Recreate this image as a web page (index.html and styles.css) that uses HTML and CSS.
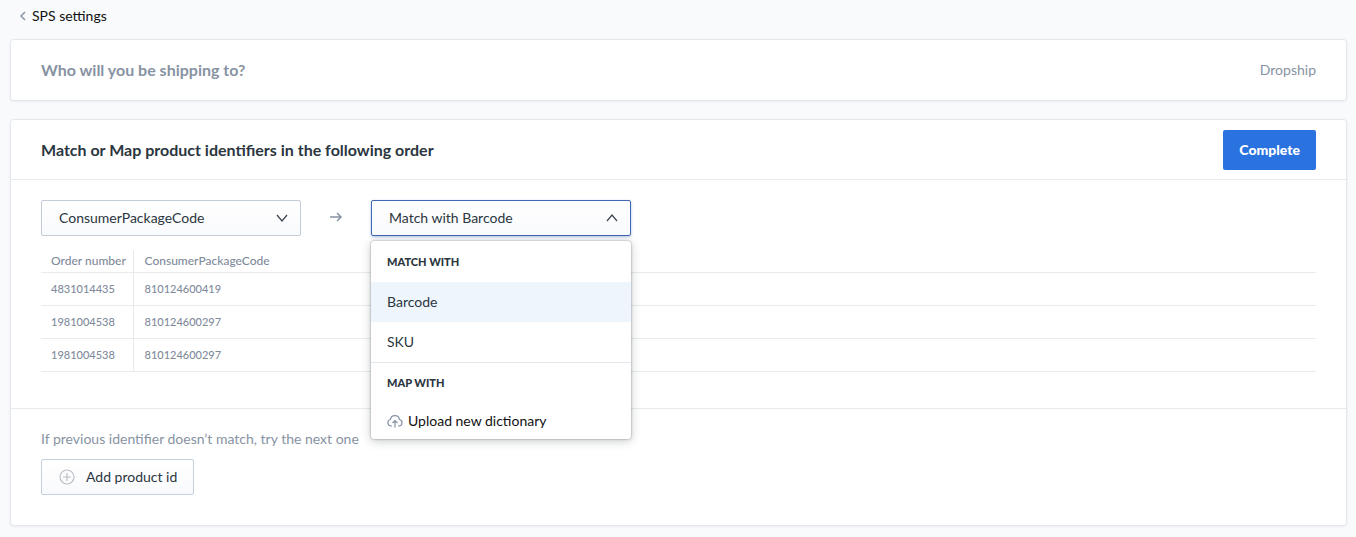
FILE: index.html
```html
<!DOCTYPE html>
<html lang="en">
<head>
<meta charset="UTF-8">
<meta name="viewport" content="width=device-width, initial-scale=1.0">
<title>SPS settings</title>
<link rel="stylesheet" href="styles.css">
</head>
<body>
<nav class="topbar">
  <a class="back" href="#">
    <svg width="6" height="10" viewBox="0 0 6 10"><path d="M5 1L1 5l4 4"/></svg>
    SPS settings
  </a>
</nav>

<main class="page">
  <section class="card shipping">
    <h2>Who will you be shipping to?</h2>
    <span>Dropship</span>
  </section>

  <section class="card">
    <header class="card-header">
      <h2>Match or Map product identifiers in the following order</h2>
      <button class="btn-primary" type="button">Complete</button>
    </header>

    <div class="card-body">
      <div class="mapping">
        <div class="select">
          <select id="source" aria-label="Product identifier">
            <option>ConsumerPackageCode</option>
          </select>
          <svg class="chevron" width="12" height="8" viewBox="0 0 12 8"><path d="M1 1l5 6 5-6"/></svg>
        </div>
        <svg class="arrow" width="14" height="12" viewBox="0 0 14 12"><path d="M1 5h11M8 1l4 4-4 4"/></svg>
        <div class="select open">
          <select id="target" aria-label="Match or map with">
            <option>Match with Barcode</option>
            <option>Match with SKU</option>
          </select>
          <svg class="chevron" width="12" height="8" viewBox="0 0 12 8"><path d="M1 7l5-6 5 6"/></svg>
          <div class="menu">
            <h3>Match with</h3>
            <button class="option selected" type="button">Barcode</button>
            <button class="option" type="button">SKU</button>
            <h3 class="divided">Map with</h3>
            <button class="option upload" type="button">
              <svg width="16" height="14" viewBox="0 0 16 14"><path d="M5 12H4a3.300 3.300 0 0 1-.6-6.500A4.600 4.600 0 0 1 12.500 5.500 3.300 3.300 0 0 1 12 12h-1M8 13.500V7M5.500 9L8 6.500 10.500 9"/></svg>
              Upload new dictionary
            </button>
          </div>
        </div>
      </div>

      <table>
        <thead>
          <tr><th>Order number</th><th>ConsumerPackageCode</th></tr>
        </thead>
        <tbody>
          <tr><td>4831014435</td><td>810124600419</td></tr>
          <tr><td>1981004538</td><td>810124600297</td></tr>
          <tr><td>1981004538</td><td>810124600297</td></tr>
        </tbody>
      </table>
    </div>

    <footer class="card-footer">
      <p>If previous identifier doesn’t match, try the next one</p>
      <button class="btn-add" type="button">
        <svg width="16" height="16" viewBox="0 0 16 16"><circle cx="8" cy="8" r="7"/><path d="M8 4v8M4 8h8"/></svg>
        Add product id
      </button>
    </footer>
  </section>
</main>
</body>
</html>
```
FILE: styles.css
```css
* {
  box-sizing: border-box;
}

body {
  margin: 0;
  background-color: #f8fafc;
  color: #2b3640;
  font-family: Lato, "Liberation Sans", sans-serif;
  font-size: 14px;
  line-height: 20px;
}

h2, h3, p {
  margin: 0;
}

h2 {
  font-size: 16px;
  line-height: 24px;
}

svg {
  flex: none;
  fill: none;
  stroke: #8793a3;
  stroke-width: 1.2;
}

button, select {
  font: inherit;
  color: inherit;
  cursor: pointer;
}

.topbar {
  padding: 6px 20px 14px;
}

.back {
  display: inline-flex;
  align-items: center;
  gap: 6px;
  color: #111;
  text-decoration: none;
}

.back svg {
  stroke-width: 1.5;
}

.page {
  display: flex;
  flex-direction: column;
  gap: 20px;
  padding: 0 10px 10px 11px;
}

.card {
  background: #fff;
  border-radius: 3px;
  box-shadow: 0 0 1px 1px #e4e8ec, 0 1px 3px rgba(50, 60, 80, 0.12);
}

.shipping {
  display: flex;
  align-items: center;
  justify-content: space-between;
  min-height: 60px;
  padding: 0 30px;
  color: #8793a3;
}

.card-header {
  display: flex;
  align-items: center;
  justify-content: space-between;
  padding: 10px 30px 9px;
  border-bottom: 1px solid #e8ebee;
}

.btn-primary {
  height: 40px;
  padding: 0 16px;
  border: 0;
  border-radius: 2px;
  background: #2a72e0;
  color: #fff;
  font-weight: 900;
}

.card-body {
  padding: 20px 30px 36px;
  border-bottom: 1px solid #e8ebee;
}

.mapping {
  display: flex;
  align-items: center;
  margin-bottom: 14px;
}

.arrow {
  margin: 0 28px;
  stroke-width: 1.5;
}

.select {
  position: relative;
  width: 260px;
}

.select select {
  display: block;
  appearance: none;
  width: 100%;
  height: 36px;
  padding: 0 40px 0 17px;
  border: 1px solid #c3cbd9;
  border-radius: 2px;
  background: linear-gradient(#fff, #f9fafc);
}

.select.open select {
  border-color: #3f68b5;
  box-shadow: 0 1px 3px rgba(63, 104, 181, 0.4);
}

.chevron {
  position: absolute;
  top: 14px;
  right: 13px;
  stroke: #3c4650;
  pointer-events: none;
}

.menu {
  position: absolute;
  top: 41px;
  left: 0;
  width: 100%;
  z-index: 1;
  padding-top: 1px;
  border-radius: 3px;
  background: #fff;
  box-shadow: 0 0 2px rgba(30, 40, 50, 0.5), 0 2px 10px rgba(30, 40, 50, 0.25);
}

.menu h3 {
  padding: 0 16px;
  font-size: 11px;
  font-weight: 900;
  line-height: 40px;
  text-transform: uppercase;
}

.menu .divided {
  border-top: 1px solid #e4e8ec;
}

.option {
  display: block;
  width: 100%;
  height: 40px;
  padding: 0 16px;
  border: 0;
  background: none;
  text-align: left;
}

.option.selected {
  background: #eef5fd;
}

.option.upload {
  display: flex;
  align-items: center;
  gap: 5px;
  height: 36px;
  color: #111;
}

table {
  width: 100%;
  border-collapse: collapse;
  color: #7f8b9b;
  font-size: 11px;
}

th, td {
  padding: 0 10px 0 11px;
  height: 33px;
  border-bottom: 1px solid #e8ebee;
  text-align: left;
  font-weight: 500;
}

th {
  height: 22px;
  font-size: 12px;
}

th:first-child, td:first-child {
  width: 92px;
  padding-right: 6px;
  padding-left: 10px;
  border-right: 1px solid #e8ebee;
  white-space: nowrap;
}

.card-footer {
  padding: 20px 30px 30px;
}

.card-footer p {
  margin-bottom: 10px;
  color: #8793a3;
}

.btn-add {
  display: flex;
  align-items: center;
  gap: 11px;
  height: 36px;
  padding: 0 16px 0 17px;
  border: 1px solid #c3d0df;
  border-radius: 2px;
  background: linear-gradient(#fff, #f9fafc);
}

.btn-add svg {
  stroke: #b9bec4;
}
```
